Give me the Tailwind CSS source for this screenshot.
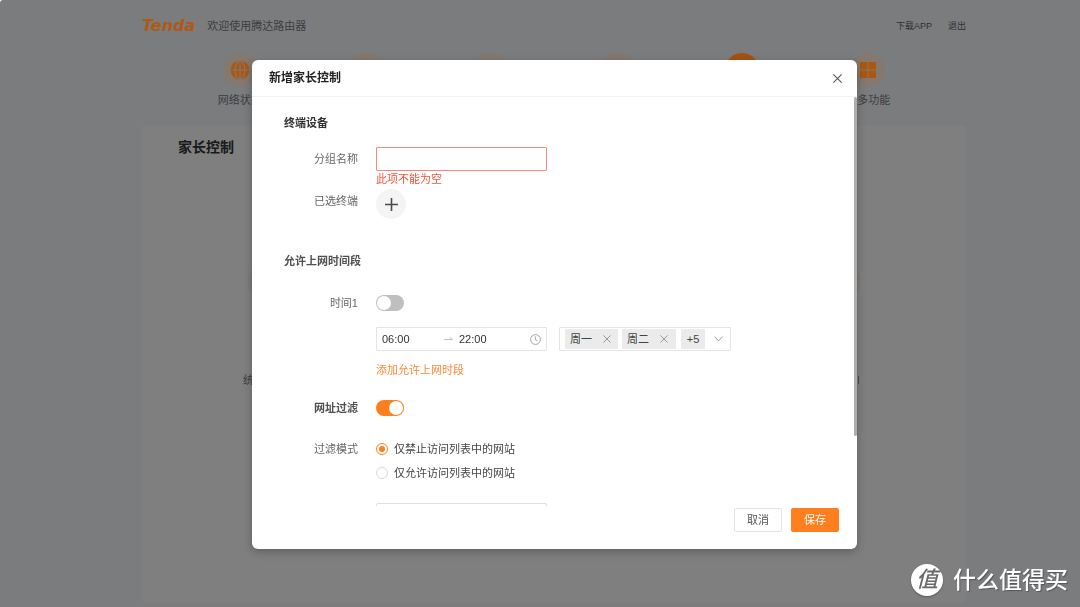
<!DOCTYPE html>
<html lang="zh-CN" class="bg-white">
<head>
<meta charset="utf-8">
<meta name="viewport" content="width=device-width, initial-scale=1">
<title>家长控制</title>
<script src="https://cdn.jsdelivr.net/npm/@tailwindcss/browser@4"></script>
</head>
<body class="font-['Liberation_Sans','Noto_Sans_CJK_SC',sans-serif] text-[11px] leading-4 text-[#444]">

<!-- Dimmed page behind the dialog -->
<div class="flex min-h-screen flex-col rounded-tl-[3px] bg-[#7b7c7e] pl-7">
  <div class="mx-auto flex w-full max-w-[824px] flex-1 flex-col pt-3.5">
    <header class="flex h-6 items-center justify-between">
      <div class="flex items-center gap-3 text-[#3c3d3f]">
        <span class="font-['DejaVu_Sans'] text-[16px] font-bold italic text-[#ae5a17]">Tenda</span>
        <span>欢迎使用腾达路由器</span>
      </div>
      <nav class="flex gap-4 text-[9px] text-[#2f3031]">
        <a href="#">下载APP</a>
        <a href="#">退出</a>
      </nav>
    </header>

    <nav class="mt-[15px] grid h-[55px] grid-cols-6 px-[35px] text-[#3c3d3f]">
      <a href="#" class="flex flex-col items-center gap-[5px]">
        <span class="flex size-[34px] items-center justify-center rounded-full bg-[#84786f]">
          <svg class="size-5" viewBox="0 0 20 20" fill="none" stroke="#84786f" stroke-width="1.2">
            <circle cx="10" cy="10" r="9.400" fill="#ac5711" stroke="none"/>
            <ellipse cx="10" cy="10" rx="4.800" ry="9.400"/>
            <path d="M10 0v20M0 10h20"/>
          </svg>
        </span>
        <span>网络状态</span>
      </a>
      <a href="#" class="flex justify-center"><span class="size-[34px] rounded-full bg-[#84786f]"></span></a>
      <a href="#" class="flex justify-center"><span class="size-[34px] rounded-full bg-[#84786f]"></span></a>
      <a href="#" class="flex justify-center"><span class="size-[34px] rounded-full bg-[#84786f]"></span></a>
      <a href="#" aria-current="page" class="flex justify-center"><span class="size-[34px] rounded-full bg-[#a5530f]"></span></a>
      <a href="#" class="flex flex-col items-center gap-[5px]">
        <span class="flex size-[34px] items-center justify-center rounded-full bg-[#84786f]">
          <svg class="size-4" viewBox="0 0 16 16" fill="#ac5711">
            <path d="M0 0h7.500v7.500H0zM8.500 0H16v7.500H8.500zM0 8.500h7.500V16H0zM8.500 8.500H16V16H8.500z"/>
          </svg>
        </span>
        <span>更多功能</span>
      </a>
    </nav>

    <main class="mt-[18px] mb-1 flex-1 rounded bg-[#7f7f7f] px-9 pt-[11px]">
      <h1 class="text-[14px] leading-5 font-bold text-[#191919]">家长控制</h1>
      <div class="mt-[98px] flex justify-between px-[70px]">
        <span class="size-[54px] rounded-full bg-[#7b7b7b]"></span>
        <span class="size-[54px] rounded-full bg-[#807972]"></span>
      </div>
      <div class="mt-[63px] flex items-center justify-between px-[65px] text-[#3f3f3f]">
        <span>统</span>
        <span class="mr-1.5 h-2 w-px bg-[#4a4a4a]"></span>
      </div>
    </main>
  </div>
</div>

<!-- Dialog -->
<div class="fixed inset-0 flex items-center justify-center pt-0.5 pl-[29px]">
  <section role="dialog" aria-modal="true" aria-labelledby="dialog-title" class="relative w-full max-w-[605px] overflow-hidden rounded-md bg-white shadow-[0_3px_10px_rgba(0,0,0,0.25)]">
    <header class="flex h-[37px] items-center justify-between border-b border-[#f3f3f3] pr-[15px] pl-[17px]">
      <h2 id="dialog-title" class="text-[12px] font-bold text-[#222]">新增家长控制</h2>
      <button type="button" aria-label="关闭">
        <svg class="size-[9px]" viewBox="0 0 9 9" fill="none" stroke="#555" stroke-width="1.1"><path d="M.4.4l8.200 8.200M8.600.4L.4 8.600"/></svg>
      </button>
    </header>

    <form id="rule" class="max-h-[409px] overflow-y-auto pt-[18px] pl-8 [scrollbar-width:none]">
      <h3 class="font-bold text-[#333]">终端设备</h3>

      <div class="mt-4 flex gap-[18px]">
        <label for="group" class="w-[74px] text-right leading-6 text-[#666]">分组名称</label>
        <div>
          <input id="group" type="text" aria-invalid="true" aria-describedby="group-error" class="block h-6 w-[171px] rounded-[1px] border border-[#f5897b] px-1.5 outline-none">
          <p id="group-error" class="text-[#f0543c]">此项不能为空</p>
        </div>
      </div>

      <div class="mt-0.5 flex gap-[18px]">
        <span class="w-[74px] text-right leading-6 text-[#666]">已选终端</span>
        <button type="button" aria-label="添加终端" class="flex size-[30px] items-center justify-center rounded-full bg-[#f4f4f4]">
          <svg class="size-[13px]" viewBox="0 0 13 13" fill="none" stroke="#4a4a4a" stroke-width="1.600"><path d="M6.500 0v13M0 6.500h13"/></svg>
        </button>
      </div>

      <h3 class="mt-[34px] font-bold text-[#505050]">允许上网时间段</h3>

      <div class="mt-[22px] flex h-6 items-center gap-[18px]">
        <label for="time1" class="w-[74px] text-right text-[#666]">时间1</label>
        <input id="time1" type="checkbox" role="switch" class="h-4 w-7 appearance-none rounded-full bg-[#bfbfbf] p-px before:block before:size-3.5 before:rounded-full before:bg-white checked:bg-[#ff7f1f] checked:before:ml-auto">
      </div>

      <div class="mt-3 flex gap-3 pl-[92px]">
        <div class="flex h-6 w-[171px] items-center rounded-[1px] border border-[#e4e4e4] px-[5px] text-[#333]">
          <input type="text" aria-label="开始时间" value="06:00" class="w-[62px] outline-none">
          <svg class="h-2 w-[9px]" viewBox="0 0 9 8" fill="none" stroke="#bbb" stroke-width=".9"><path d="M0 4.500h8.500L5.800 2.200"/></svg>
          <input type="text" aria-label="结束时间" value="22:00" class="ml-1.5 w-0 flex-1 outline-none">
          <svg class="size-[11px]" viewBox="0 0 11 11" fill="none" stroke="#999" stroke-width=".9"><circle cx="5.500" cy="5.500" r="4.900"/><path d="M5.300 2.400v3.300l2.300 1.100"/></svg>
        </div>
        <div role="group" aria-label="重复日期" class="flex h-6 w-[172px] items-center rounded-[1px] border border-[#e4e4e4] pl-[5px]">
          <span class="flex h-5 w-[53px] items-center justify-between rounded-[1px] bg-[#ebebeb] pr-[7px] pl-[5px]">周一
            <button type="button" aria-label="移除周一"><svg class="size-2" viewBox="0 0 8 8" fill="none" stroke="#999" stroke-width="1"><path d="M.4.4l7.200 7.200M7.600.4L.4 7.600"/></svg></button>
          </span>
          <span class="ml-1 flex h-5 w-[54px] items-center justify-between rounded-[1px] bg-[#ebebeb] pr-2 pl-[5px]">周二
            <button type="button" aria-label="移除周二"><svg class="size-2" viewBox="0 0 8 8" fill="none" stroke="#999" stroke-width="1"><path d="M.4.4l7.200 7.200M7.600.4L.4 7.600"/></svg></button>
          </span>
          <span class="ml-[5px] flex h-5 w-6 items-center justify-center rounded-[1px] bg-[#ebebeb]">+5</span>
          <button type="button" aria-label="展开" class="ml-[9px]"><svg class="h-1.5 w-[9px]" viewBox="0 0 9 6" fill="none" stroke="#999" stroke-width="1"><path d="M.4.6l4.100 4.300L8.600.6"/></svg></button>
        </div>
      </div>

      <div class="mt-[11px] flex pl-[92px]">
        <a href="#" class="text-[#fb8a38]">添加允许上网时段</a>
      </div>

      <div class="mt-[18px] flex h-6 items-center gap-[18px]">
        <label for="filter" class="w-[74px] text-right font-bold text-[#505050]">网址过滤</label>
        <input id="filter" type="checkbox" role="switch" checked class="h-4 w-7 appearance-none rounded-full bg-[#bfbfbf] p-px before:block before:size-3.5 before:rounded-full before:bg-white checked:bg-[#ff7f1f] checked:before:ml-auto">
      </div>

      <fieldset class="mt-[17px] flex gap-[18px]">
        <span class="w-[74px] text-right leading-6 text-[#666]">过滤模式</span>
        <div>
          <label class="flex h-6 items-center gap-1.5">
            <input type="radio" name="mode" checked class="flex size-3 appearance-none items-center justify-center rounded-full border border-[#d9d9d9] before:size-1.5 before:rounded-full checked:border-[#ff7f1f] checked:before:bg-[#ff7f1f]">
            仅禁止访问列表中的网站
          </label>
          <label class="flex h-6 items-center gap-1.5">
            <input type="radio" name="mode" class="flex size-3 appearance-none items-center justify-center rounded-full border border-[#d9d9d9] before:size-1.5 before:rounded-full checked:border-[#ff7f1f] checked:before:bg-[#ff7f1f]">
            仅允许访问列表中的网站
          </label>
        </div>
      </fieldset>

      <div class="mt-[18px] pl-[92px]">
        <textarea aria-label="网址列表" class="block h-[120px] w-[171px] resize-none rounded-[2px] border border-[#e0e0e0] p-1.5 outline-none"></textarea>
      </div>
    </form>
    <div class="absolute top-[37px] right-0 h-[339px] w-[3px] rounded-full bg-[#adadad]"></div>

    <footer class="flex justify-end gap-[9px] pt-0.5 pr-[18px] pb-[17px]">
      <button type="button" class="h-6 w-12 rounded-[2px] border border-[#e4e4e4] text-[#555]">取消</button>
      <button type="submit" form="rule" class="h-6 w-12 rounded-[2px] bg-[#ff7f1f] text-white">保存</button>
    </footer>
  </section>
</div>

<!-- Watermark -->
<div class="fixed right-3 bottom-[11px] flex items-center gap-2.5 text-[23px] leading-8 font-medium text-white">
  <span class="flex size-8 items-center justify-center rounded-full bg-white text-[22px] text-[#6a6a6a] italic shadow-[0_1px_2px_rgba(0,0,0,0.3)]">值</span>
  <span class="[text-shadow:1px_1px_1px_rgba(0,0,0,0.3)]">什么值得买</span>
</div>
</body>
</html>
